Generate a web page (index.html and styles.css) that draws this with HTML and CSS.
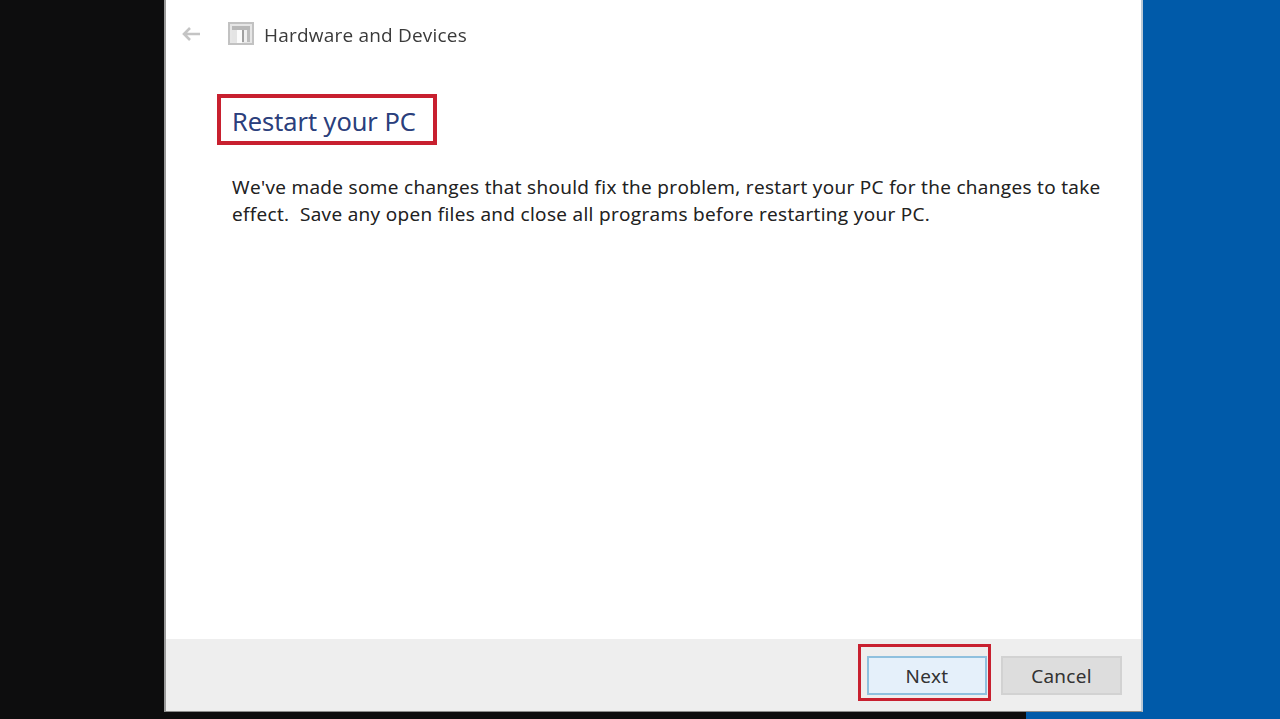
FILE: index.html
```html
<!DOCTYPE html>
<html lang="en">
<head>
<meta charset="utf-8">
<title>Hardware and Devices</title>
<link rel="stylesheet" href="styles.css">
</head>
<body>
<div class="window">
  <div class="main">
    <div class="navbar">
      <svg class="back" width="20" height="14" viewBox="0 0 20 14" aria-hidden="true"><path d="M9 1 3 7l6 6M3 7h16" fill="none" stroke="#c4c4c4" stroke-width="2.6"/></svg>
      <svg class="appicon" width="26" height="24" viewBox="0 0 26 24" aria-hidden="true">
        <rect x="1" y="1" width="24" height="21" fill="#e6e6e6" stroke="#c2c2c2" stroke-width="2"/>
        <rect x="4" y="4" width="18" height="4" fill="#b8b8b8"/>
        <rect x="4" y="8" width="5" height="12" fill="#e4e4e4"/>
        <rect x="9" y="8" width="5" height="13" fill="#fbfbfb"/>
        <rect x="14" y="8" width="2" height="12" fill="#a0a0a0"/>
        <rect x="16" y="8" width="3" height="12" fill="#f0f0f0"/>
        <rect x="19" y="8" width="3" height="12" fill="#bcbcbc"/>
      </svg>
      <span class="crumb">Hardware and Devices</span>
    </div>
    <div class="content">
      <h1 class="title">Restart your PC</h1>
      <p class="message">We've made some changes that should fix the problem, restart your PC for the changes to take effect.&nbsp; Save any open files and close all programs before restarting your PC.</p>
    </div>
  </div>
  <div class="footer">
    <div class="next-wrap">
      <button class="btn btn-next">Next</button>
    </div>
    <button class="btn btn-cancel">Cancel</button>
  </div>
</div>
</body>
</html>
```
FILE: styles.css
```css
html, body {
  margin: 0;
  padding: 0;
  height: 100%;
  overflow: hidden;
}
body {
  background: linear-gradient(to right, #0d0d0e 0, #0d0d0e 1026px, #005aa9 1026px, #005aa9 100%);
  font-family: "Open Sans", "Noto Sans", sans-serif;
  color: #2b2b2b;
}
.window {
  box-sizing: border-box;
  margin-left: 164px;
  width: 979px;
  height: 712px;
  display: flex;
  flex-direction: column;
  background: #fff;
  border-left: 2px solid #9a9a9a;
  border-right: 2px solid #b9c8d6;
  border-bottom: 1px solid #8c8c8c;
}
.main {
  flex: 1;
  display: flex;
  flex-direction: column;
}
.navbar {
  display: flex;
  align-items: center;
  height: 68px;
  padding-left: 15px;
}
.back {
  margin-right: 27px;
  filter: blur(0.5px);
}
.appicon {
  margin-right: 10px;
  filter: blur(0.6px);
}
.crumb {
  padding-top: 1px;
  font-size: 19px;
  letter-spacing: 0.2px;
  color: #3a3a3a;
  filter: blur(0.35px);
}
.content {
  padding: 26px 0 0 66px;
}
.title {
  box-sizing: border-box;
  width: 220px;
  height: 51px;
  margin: 0 0 29px -15px;
  padding: 6px 0 0 11px;
  border: 4px solid #c8202f;
  font-size: 25.5px;
  line-height: 34px;
  font-weight: 400;
  color: #2a3f7e;
}
.title, .message, .btn {
  text-shadow: 0 0 0.6px rgba(40, 40, 40, 0.35);
}
.message {
  margin: 0;
  width: 880px;
  font-size: 19px;
  letter-spacing: 0.34px;
  line-height: 27px;
  color: #222;
}
.footer {
  box-sizing: border-box;
  height: 72px;
  display: flex;
  justify-content: flex-end;
  align-items: flex-start;
  gap: 14px;
  padding: 17px 19px 0 0;
  background: #eeeeee;
}
.next-wrap {
  position: relative;
}
.next-wrap::after {
  content: "";
  position: absolute;
  left: -9px;
  top: -12px;
  right: -4px;
  bottom: -6px;
  border: 3.5px solid #c8202f;
  pointer-events: none;
}
.btn {
  display: block;
  box-sizing: border-box;
  width: 121px;
  height: 39px;
  padding: 0;
  font: inherit;
  font-size: 19px;
  letter-spacing: 0.3px;
  color: #333;
  background: #dddddd;
  border: 2px solid #d2d2d2;
}
.btn-next {
  width: 120px;
  background: #e5f0fa;
  border: 2px solid #8fc0de;
}
```
